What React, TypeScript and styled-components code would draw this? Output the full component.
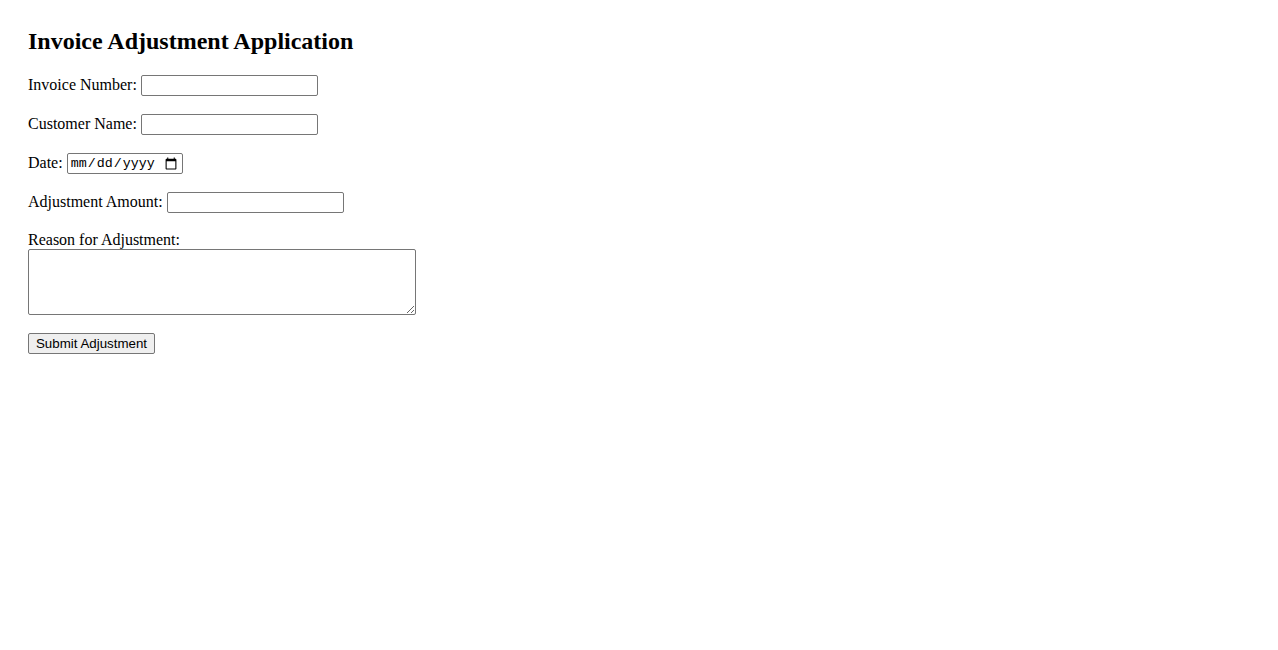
import React from "react";
import styled, { createGlobalStyle } from "styled-components";

const Global = createGlobalStyle`
  html, body { margin: 0; padding: 0; background: #fff; }
  body { font-family: "Liberation Serif", "Times New Roman", serif; font-size: 16px; color: #000; }
`;

const Page = styled.div`
  padding: 28px;
`;

const Title = styled.h2`
  margin: 0 0 20px;
  font-size: 24px;
  font-weight: bold;
  line-height: 27px;
`;

const Form = styled.form`
  display: flex;
  flex-direction: column;
  align-items: flex-start;
`;

const Group = styled.div<{ $stack?: boolean }>`
  display: flex;
  flex-direction: ${(p) => (p.$stack ? "column" : "row")};
  align-items: ${(p) => (p.$stack ? "flex-start" : "center")};
  gap: ${(p) => (p.$stack ? "0" : "4px")};
  margin-bottom: 18px;
  min-height: 21px;
`;

const Label = styled.label<{ $block?: boolean }>`
  font-size: 16px;
  line-height: 18px;
  padding-bottom: ${(p) => (p.$block ? "0" : "2px")};
`;

const TextInput = styled.input<{ $w?: number }>`
  box-sizing: border-box;
  width: ${(p) => p.$w ?? 177}px;
  height: 21px;
  border: 1px solid #767676;
  border-radius: 2px;
  padding: 1px 2px;
  font-family: "Liberation Mono", monospace;
  font-size: 13.33px;
  background: #fff;
  margin: 0;
`;

const Area = styled.textarea`
  box-sizing: border-box;
  width: 388px;
  height: 66px;
  border: 1px solid #767676;
  border-radius: 2px;
  padding: 2px;
  font-family: "Liberation Mono", monospace;
  font-size: 13.33px;
  margin: 0;
  resize: both;
`;

const Button = styled.button`
  box-sizing: border-box;
  height: 21px;
  width: 127px;
  padding: 1px 6px;
  font-family: "Liberation Sans", Arial, sans-serif;
  font-size: 13.33px;
  color: #000;
  background: #efefef;
  border: 1px solid #767676;
  border-radius: 2px;
  margin: 0;
`;

export default function App() {
  return (
    <>
      <Global />
      <Page>
        <Title>Invoice Adjustment Application</Title>
        <Form onSubmit={(e) => e.preventDefault()}>
          <Group>
            <Label htmlFor="inv">Invoice Number:</Label>
            <TextInput id="inv" type="text" />
          </Group>
          <Group>
            <Label htmlFor="cust">Customer Name:</Label>
            <TextInput id="cust" type="text" />
          </Group>
          <Group>
            <Label htmlFor="date">Date:</Label>
            <TextInput id="date" type="date" $w={116} />
          </Group>
          <Group>
            <Label htmlFor="amt">Adjustment Amount:</Label>
            <TextInput id="amt" type="number" />
          </Group>
          <Group $stack>
            <Label $block htmlFor="reason">Reason for Adjustment:</Label>
            <Area id="reason" />
          </Group>
          <Button type="submit">Submit Adjustment</Button>
        </Form>
      </Page>
    </>
  );
}
